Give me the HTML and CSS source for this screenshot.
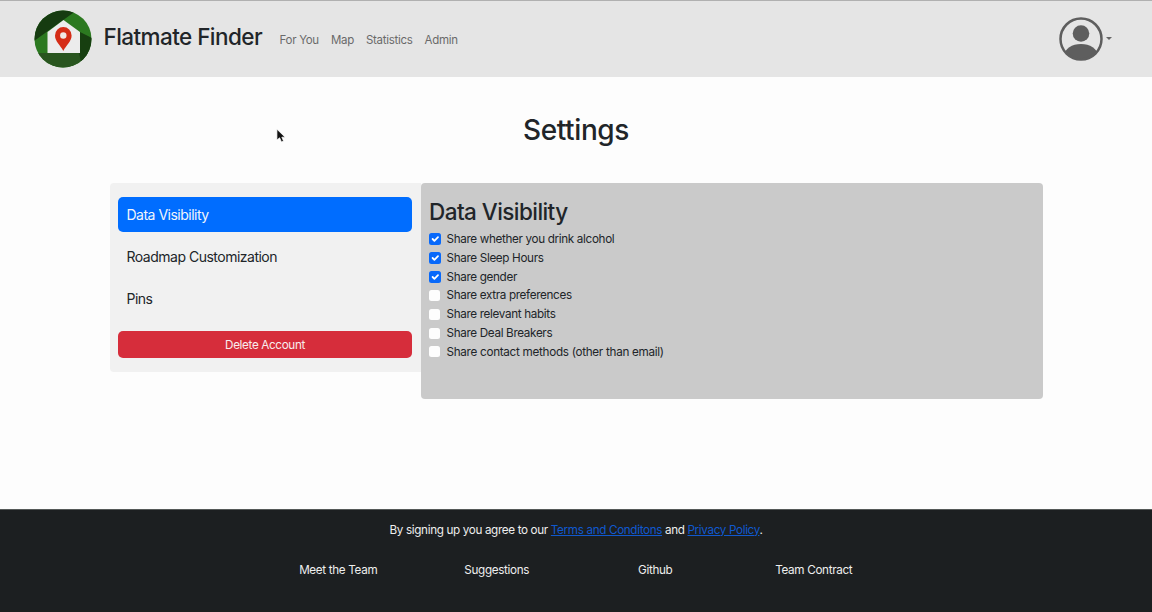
FILE: index.html
```html
<!DOCTYPE html>
<html lang="en">
<head>
<meta charset="utf-8">
<title>Flatmate Finder</title>
<link rel="stylesheet" href="styles.css">
</head>
<body>
<header class="navbar">
  <svg class="logo" viewBox="0 0 58 58" aria-hidden="true">
    <defs><clipPath id="disc"><circle cx="29" cy="29" r="28.5"/></clipPath></defs>
    <g clip-path="url(#disc)">
      <rect width="58" height="58" fill="#2c7920"/>
      <path d="M0 0H43L39 3 0 31Z" fill="#163b10"/>
      <path d="M0 43H58V58H0Z" fill="#29551f"/>
      <path d="M45 21.500 58 28V45L47 52 45 43Z" fill="#173f10"/>
    </g>
    <path d="M29.500 10 46 22V43H13.500V22Z" fill="#ececec"/>
    <path d="M29.300 41C26.300 35 21 31.500 21 25.500a8.300 8.500 0 0 1 16.600 0C37.600 31.500 32.300 35 29.300 41Z" fill="#d52d17"/>
    <circle cx="29.300" cy="25.500" r="3.200" fill="#f1e8e6"/>
  </svg>
  <a class="brand">Flatmate Finder</a>
  <nav class="nav"><a>For You</a><a>Map</a><a>Statistics</a><a>Admin</a></nav>
  <div class="account">
    <svg class="avatar" viewBox="0 0 44 44" aria-hidden="true">
      <defs><clipPath id="ring"><circle cx="22" cy="22" r="21"/></clipPath></defs>
      <ellipse cx="22" cy="38" rx="16.500" ry="11" fill="#5e5e5e" clip-path="url(#ring)"/>
      <circle cx="22" cy="16.500" r="8.300" fill="#5e5e5e"/>
      <circle cx="22" cy="22" r="20.500" fill="none" stroke="#5e5e5e" stroke-width="2.500"/>
    </svg>
    <span class="caret"></span>
  </div>
</header>
<main class="main">
  <h1 class="title">Settings</h1>
  <div class="settings">
    <aside class="sidebar">
      <a class="tab active">Data Visibility</a>
      <a class="tab">Roadmap Customization</a>
      <a class="tab">Pins</a>
      <button class="delete">Delete Account</button>
    </aside>
    <section class="panel">
      <h2 class="heading">Data Visibility</h2>
      <label class="check"><input type="checkbox" checked><span class="box"><svg viewBox="0 0 20 20"><path d="m6 10 3 3 6-6"/></svg></span>Share whether you drink alcohol</label>
      <label class="check"><input type="checkbox" checked><span class="box"><svg viewBox="0 0 20 20"><path d="m6 10 3 3 6-6"/></svg></span>Share Sleep Hours</label>
      <label class="check"><input type="checkbox" checked><span class="box"><svg viewBox="0 0 20 20"><path d="m6 10 3 3 6-6"/></svg></span>Share gender</label>
      <label class="check"><input type="checkbox"><span class="box"></span>Share extra preferences</label>
      <label class="check"><input type="checkbox"><span class="box"></span>Share relevant habits</label>
      <label class="check"><input type="checkbox"><span class="box"></span>Share Deal Breakers</label>
      <label class="check wide"><input type="checkbox"><span class="box"></span>Share contact methods (other than email)</label>
    </section>
  </div>
  <svg class="pointer" viewBox="0 0 11 17" aria-hidden="true"><path d="M1 1V13L4 10.500 6 15 8.300 14 6.400 9.800H10Z" fill="#111" stroke="#fff" stroke-width=".8"/></svg>
</main>
<footer class="footer">
  <p class="terms">By signing up you agree to our <a class="link">Terms and Conditons</a> and <a class="link">Privacy Policy</a>.</p>
  <div class="links"><a>Meet the Team</a><a>Suggestions</a><a>Github</a><a>Team Contract</a></div>
</footer>
</body>
</html>
```

FILE: styles.css
```css
* { box-sizing: border-box; }
body {
  margin: 0;
  height: 612px;
  display: flex;
  flex-direction: column;
  background: #fdfdfd;
  color: #212529;
  font: 11.7px/18.75px Inter, "Liberation Sans", sans-serif;
  letter-spacing: -0.34px;
}
.navbar {
  height: 77px;
  flex: none;
  display: flex;
  align-items: center;
  padding: 0 40px 0 34px;
  background: #e5e5e5;
  border-top: 1px solid #b0b0b0;
}
.logo { width: 58px; height: 58px; }
.brand {
  margin: -4px 0 0 11.5px;
  width: 176px;
  font-size: 22.5px;
  font-weight: 500;
  letter-spacing: -0.57px;
  line-height: 30px;
  white-space: nowrap;
}
.nav { display: flex; gap: 12px; margin-top: 2px; color: #6a6a6a; font-size: 11.5px; letter-spacing: -0.29px; }
.account { margin-left: auto; display: flex; align-items: center; gap: 3px; }
.avatar { width: 44px; height: 44px; }
.caret { border: 3px solid transparent; border-top-color: #666; border-bottom: 0; margin-top: -2px; }
.main { flex: 1; position: relative; }
.title {
  margin: 35px 0 0;
  text-align: center;
  font-size: 28px;
  font-weight: 500;
  line-height: 36px;
  letter-spacing: -0.4px;
}
.settings {
  width: 933px;
  margin: 35px 0 0 110px;
  display: flex;
  align-items: flex-start;
}
.sidebar {
  width: 310.5px;
  height: 189px;
  padding: 14px 8.5px 0 8px;
  background: #f1f1f1;
  border-radius: 4px 0 0 4px;
}
.tab {
  display: block;
  height: 35px;
  margin-bottom: 7px;
  padding: 0 8.5px;
  border-radius: 5px;
  font-size: 14px;
  line-height: 35px;
  letter-spacing: -0.5px;
}
.active { background: #006dff; color: #f1f5fb; }
.delete {
  display: block;
  width: 100%;
  height: 27px;
  margin-top: 15px;
  padding: 1px 0 0;
  border: 0;
  border-radius: 5px;
  background: #d62d3b;
  color: #f8eced;
  font: 11.7px/26px Inter, sans-serif;
  letter-spacing: -0.35px;
}
.panel {
  flex: 1;
  height: 216px;
  padding: 14px 8.5px;
  background: #cacaca;
  border-radius: 4px;
}
.heading {
  margin: 0 0 3px;
  font-size: 22.5px;
  font-weight: 500;
  line-height: 30px;
  letter-spacing: -0.56px;
}
.check { display: flex; align-items: center; height: 18.75px; }
.wide { letter-spacing: -0.29px; }
.check input { display: none; }
.box {
  width: 11px;
  height: 11px;
  margin-right: 6.5px;
  border-radius: 2.5px;
  background: #fdfdfd;
}
.check input:checked + .box { background: #0869fa; width: 12px; margin-right: 5.5px; height: 12px; }
.box svg { display: block; width: 12px; height: 12px; fill: none; stroke: #fff; stroke-width: 3; stroke-linecap: round; stroke-linejoin: round; }
.pointer { position: absolute; left: 275.5px; top: 51px; width: 10px; height: 16px; }
.footer {
  height: 103px;
  flex: none;
  padding-top: 11px;
  background: #1c1f21;
  border-top: 1px solid #555958;
  color: #eee;
  text-align: center;
}
.terms { margin: 0; letter-spacing: -0.35px; }
.link { color: #1059cf; text-decoration: underline; }
.links { width: 634px; margin: 21px auto 0; display: grid; grid-template-columns: repeat(4, 1fr); letter-spacing: -0.33px; }
```
